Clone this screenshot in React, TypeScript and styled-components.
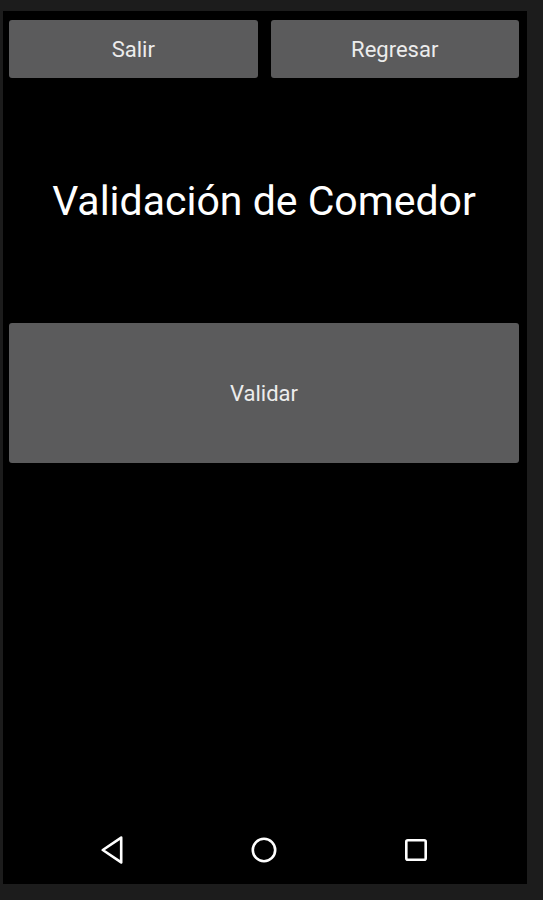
import React from "react";
import styled, { createGlobalStyle } from "styled-components";

const GlobalStyle = createGlobalStyle`
  html, body {
    margin: 0;
    padding: 0;
    background: #1c1c1c;
  }
  body {
    font-family: Roboto, "Noto Sans", sans-serif;
  }
`;

const Frame = styled.div`
  width: 543px;
  height: 900px;
  box-sizing: border-box;
  padding: 11px 16px 16px 3px;
  background: #1c1c1c;
`;

const Screen = styled.div`
  height: 100%;
  background: #000;
  display: flex;
  flex-direction: column;
  padding: 9px 8px 0 6px;
  box-sizing: border-box;
`;

const TopBar = styled.div`
  display: grid;
  grid-template-columns: 1fr 1fr;
  gap: 13px;
`;

const Button = styled.button<{ $tall?: boolean }>`
  all: unset;
  box-sizing: border-box;
  height: ${(p) => (p.$tall ? "140px" : "58px")};
  background: #5b5b5c;
  border-radius: 3px;
  color: #ececec;
  font-family: Roboto, sans-serif;
  font-size: 22px;
  text-align: center;
  display: flex;
  align-items: center;
  justify-content: center;
  cursor: pointer;
`;

const Title = styled.h1`
  margin: 99px 0 98px;
  font-family: Roboto, sans-serif;
  font-weight: 400;
  font-size: 41px;
  line-height: 48px;
  color: #fff;
  text-align: center;
`;

const Spacer = styled.div`
  flex: 1;
`;

const NavBar = styled.div`
  height: 68px;
  display: flex;
  justify-content: center;
  align-items: center;
  gap: 124px;
  margin: 0 -8px 0 -6px;
  padding: 0 3px 0 0;
  & svg {
    display: block;
  }
`;

const BackIcon = () => (
  <svg width="28" height="28" viewBox="0 0 28 28">
    <path d="M23.2 1.6 L4.8 14 L23.2 26.4 Z" fill="none" stroke="#fff" strokeWidth="2.6" strokeLinejoin="round" />
  </svg>
);

const HomeIcon = () => (
  <svg width="28" height="28" viewBox="0 0 28 28">
    <circle cx="14" cy="14" r="11.2" fill="none" stroke="#fff" strokeWidth="2.6" />
  </svg>
);

const RecentIcon = () => (
  <svg width="28" height="28" viewBox="0 0 28 28">
    <rect x="4.3" y="4.3" width="19.4" height="19.4" rx="1.5" fill="none" stroke="#fff" strokeWidth="2.6" />
  </svg>
);

export default function App() {
  return (
    <>
      <GlobalStyle />
      <Frame>
        <Screen>
          <TopBar>
            <Button>Salir</Button>
            <Button>Regresar</Button>
          </TopBar>
          <Title>Validación de Comedor</Title>
          <Button $tall>Validar</Button>
          <Spacer />
          <NavBar>
            <BackIcon />
            <HomeIcon />
            <RecentIcon />
          </NavBar>
        </Screen>
      </Frame>
    </>
  );
}
